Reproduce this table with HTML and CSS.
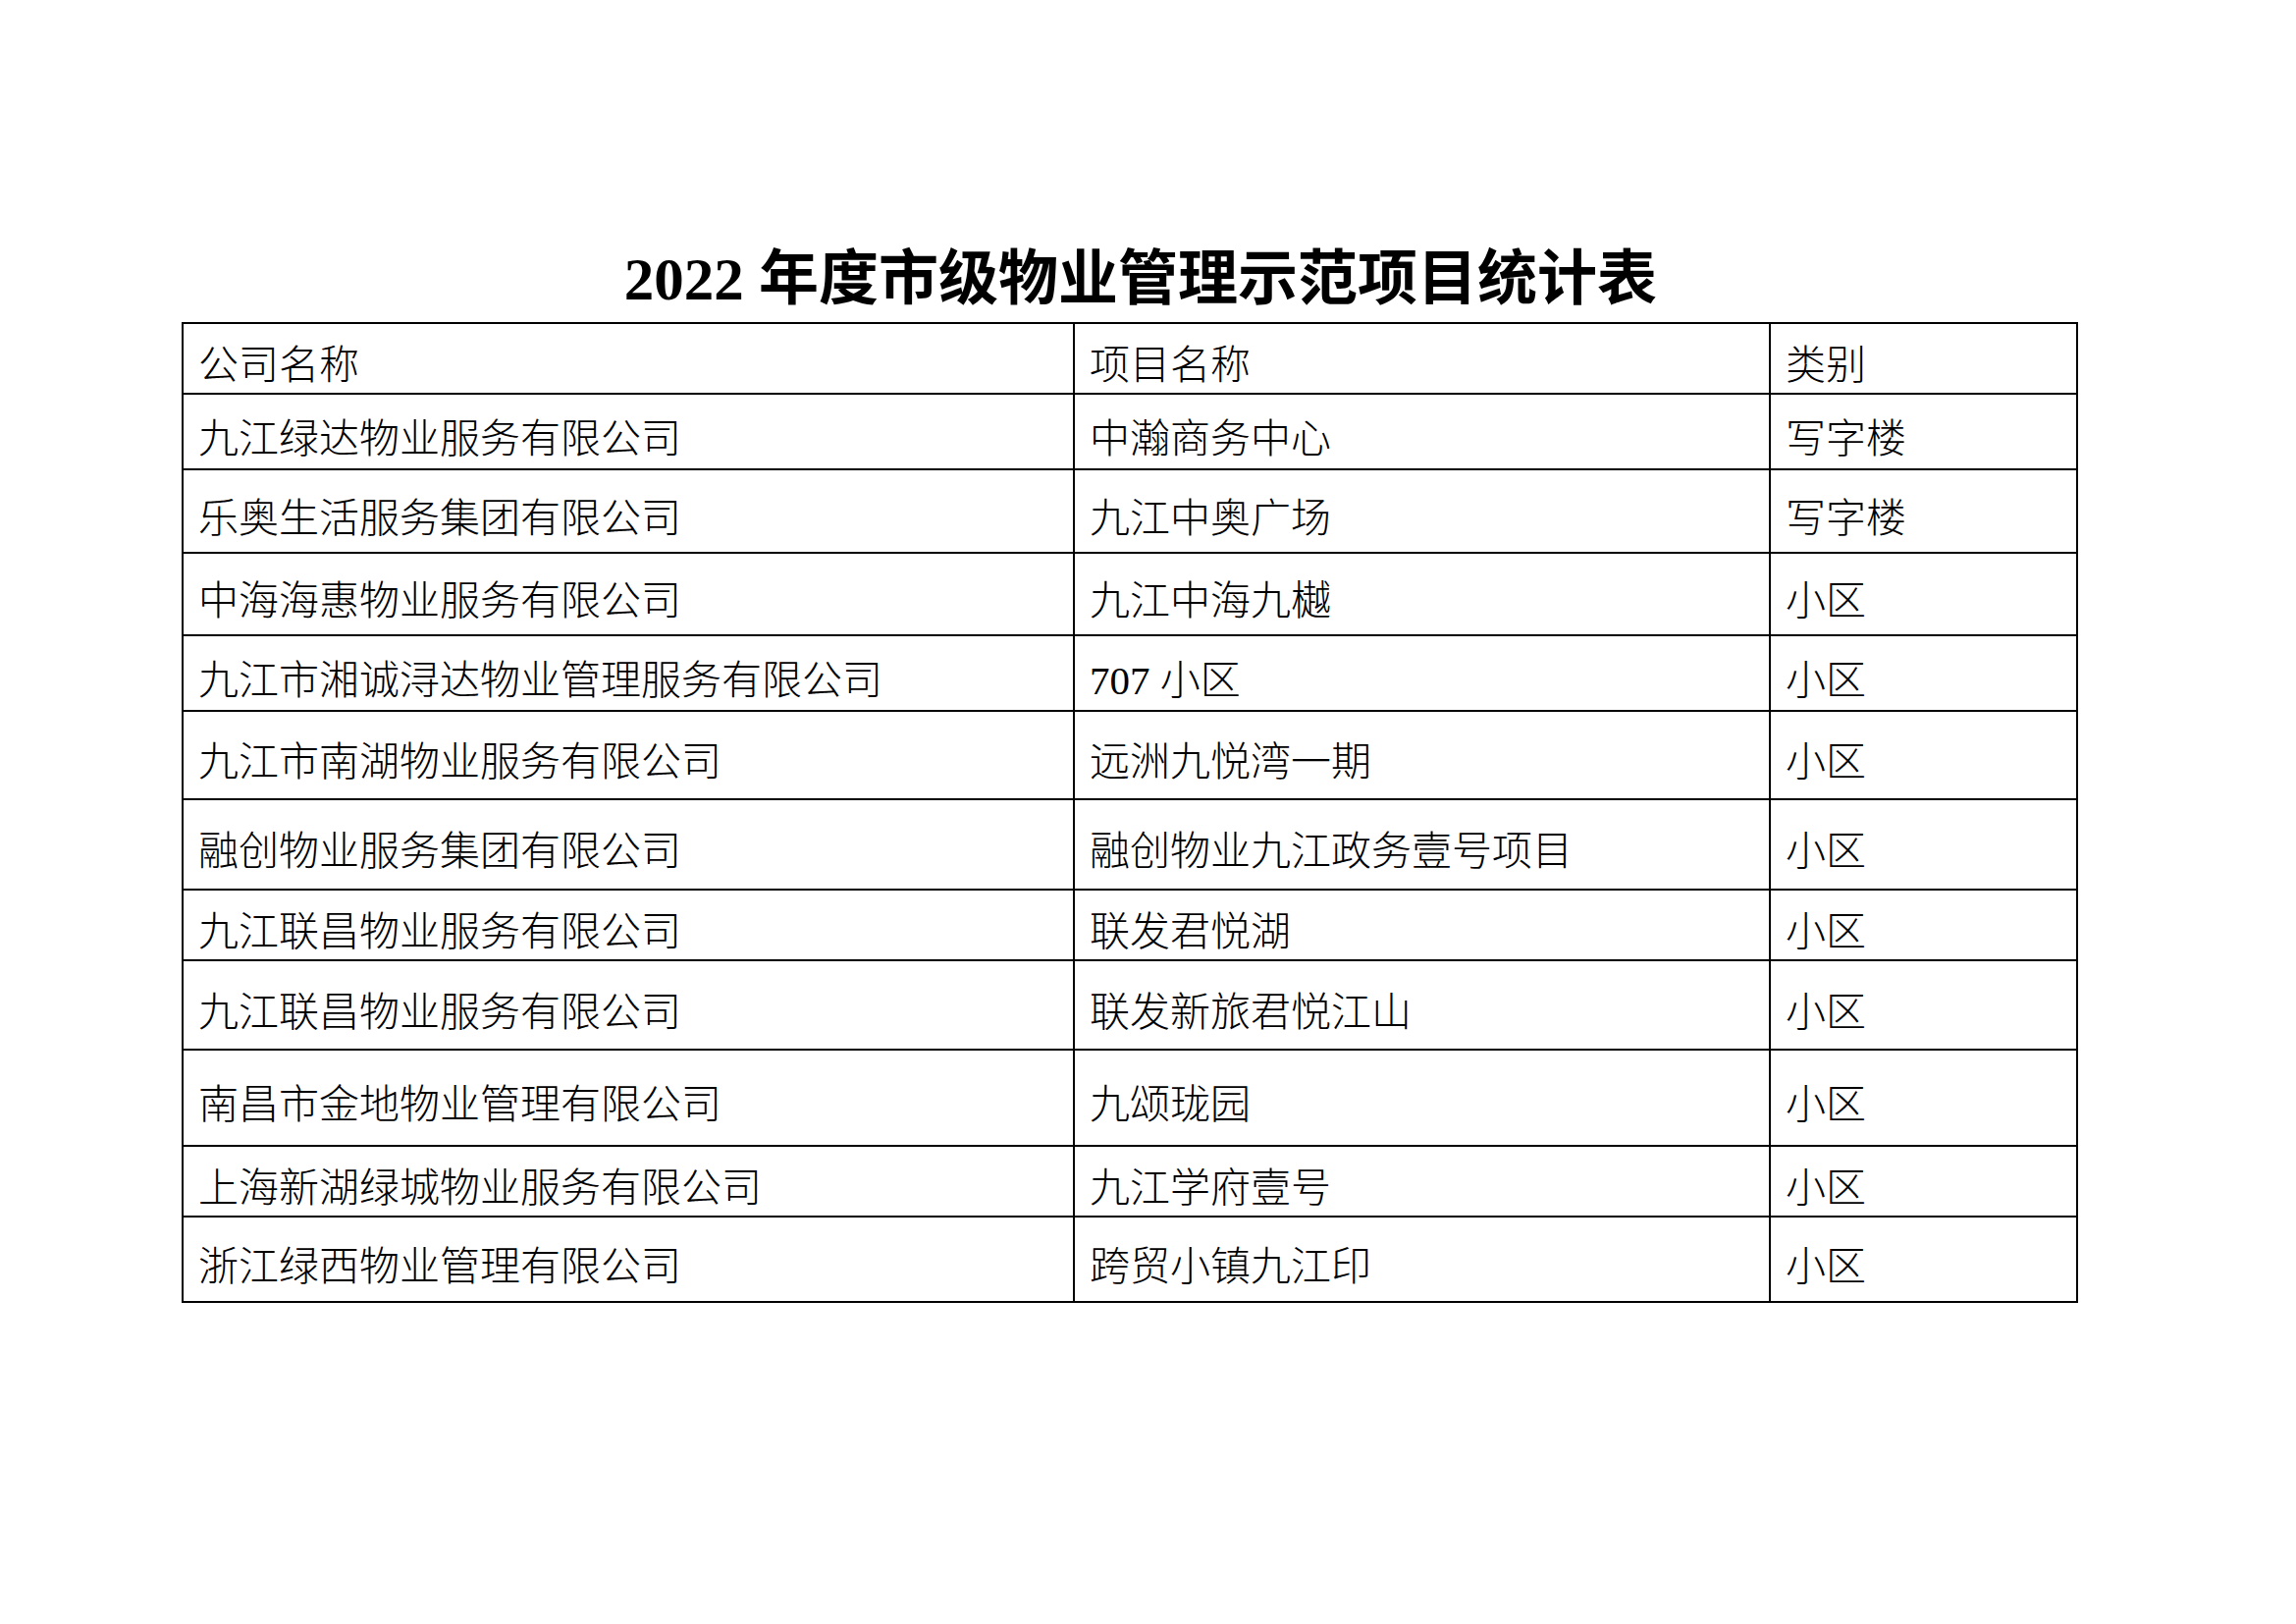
FILE: index.html
```html
<!DOCTYPE html>
<html lang="zh-CN">
<head>
<meta charset="utf-8">
<title>2022年度市级物业管理示范项目统计表</title>
<link rel="stylesheet" href="styles.css">
</head>
<body>
<div class="page">
  <h1 class="title">2022 年度市级物业管理示范项目统计表</h1>
  <table class="stats">
    <colgroup>
      <col class="c-company">
      <col class="c-project">
      <col class="c-type">
    </colgroup>
    <tbody>
      <tr><td>公司名称</td><td>项目名称</td><td>类别</td></tr>
      <tr><td>九江绿达物业服务有限公司</td><td>中瀚商务中心</td><td>写字楼</td></tr>
      <tr><td>乐奥生活服务集团有限公司</td><td>九江中奥广场</td><td>写字楼</td></tr>
      <tr><td>中海海惠物业服务有限公司</td><td>九江中海九樾</td><td>小区</td></tr>
      <tr><td>九江市湘诚浔达物业管理服务有限公司</td><td>707 小区</td><td>小区</td></tr>
      <tr><td>九江市南湖物业服务有限公司</td><td>远洲九悦湾一期</td><td>小区</td></tr>
      <tr><td>融创物业服务集团有限公司</td><td>融创物业九江政务壹号项目</td><td>小区</td></tr>
      <tr><td>九江联昌物业服务有限公司</td><td>联发君悦湖</td><td>小区</td></tr>
      <tr><td>九江联昌物业服务有限公司</td><td>联发新旅君悦江山</td><td>小区</td></tr>
      <tr><td>南昌市金地物业管理有限公司</td><td>九颂珑园</td><td>小区</td></tr>
      <tr><td>上海新湖绿城物业服务有限公司</td><td>九江学府壹号</td><td>小区</td></tr>
      <tr><td>浙江绿西物业管理有限公司</td><td>跨贸小镇九江印</td><td>小区</td></tr>
    </tbody>
  </table>
</div>
</body>
</html>
```

FILE: styles.css
```css
html, body {
  margin: 0;
  padding: 0;
  background: #ffffff;
}

body {
  width: 2339px;
  height: 1654px;
  color: #000000;
  font-family: "Liberation Serif", "Noto Sans CJK SC", serif;
}

.page {
  width: 1930px;
  margin-left: 185px;
  padding-top: 249px;
}

.title {
  margin: 0 0 7px 0;
  padding-left: 24px;
  text-align: center;
  font-size: 61px;
  line-height: 72px;
  font-weight: 700;
  letter-spacing: 0;
}

.stats {
  width: 1930px;
  border-collapse: collapse;
  table-layout: fixed;
  border: 2px solid #000000;
}

.c-company { width: 908px; }
.c-project { width: 709px; }
.c-type { width: 313px; }

.stats td {
  border: 2px solid #000000;
  padding: 16px 0 0 15px;
  vertical-align: middle;
  font-size: 41px;
  line-height: 1.2;
  font-weight: 300;
  white-space: nowrap;
  text-align: left;
}

.stats tr:nth-child(1) { height: 72px; }
.stats tr:nth-child(2) { height: 77px; }
.stats tr:nth-child(3) { height: 85px; }
.stats tr:nth-child(4) { height: 84px; }
.stats tr:nth-child(5) { height: 77px; }
.stats tr:nth-child(6) { height: 90px; }
.stats tr:nth-child(7) { height: 92px; }
.stats tr:nth-child(8) { height: 72px; }
.stats tr:nth-child(9) { height: 91px; }
.stats tr:nth-child(10) { height: 98px; }
.stats tr:nth-child(11) { height: 72px; }
.stats tr:nth-child(12) { height: 87px; }
```
